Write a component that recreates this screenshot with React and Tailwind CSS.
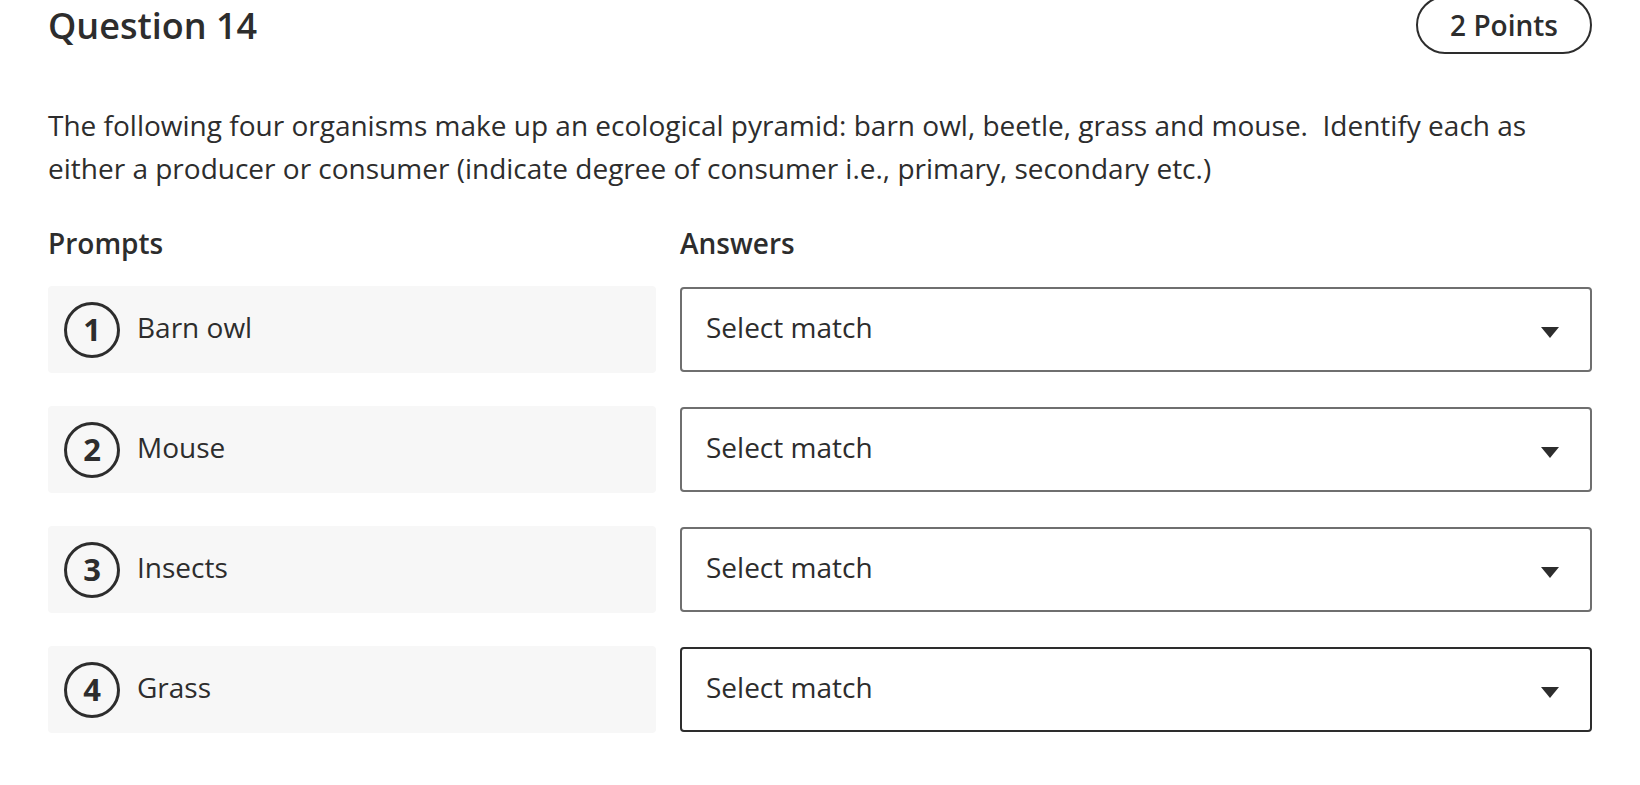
import React from "react";

const rows = [
  { n: 1, label: "Barn owl", active: false },
  { n: 2, label: "Mouse", active: false },
  { n: 3, label: "Insects", active: false },
  { n: 4, label: "Grass", active: true },
];

export default function App() {
  return (
    <div
      className="bg-white text-[#2d2d2d] px-12 w-[1640px] h-[785px] overflow-hidden"
      style={{ fontFamily: '"Open Sans", "Noto Sans", sans-serif' }}
    >
      <div className="flex justify-between items-start">
        <h1 className="mt-[5px] text-[36px] leading-[42px] font-semibold">Question 14</h1>
        <div className="-mt-1 h-[58px] px-[32px] flex items-center border-2 border-[#2d2d2d] rounded-full text-[28px] font-semibold leading-none">
          2 Points
        </div>
      </div>

      <p className="mt-[50px] text-[28px] leading-[43px]">
        The following four organisms make up an ecological pyramid: barn owl, beetle, grass and mouse.&nbsp; Identify each as either a producer or consumer (indicate degree of consumer i.e., primary, secondary etc.)
      </p>

      <div className="mt-[34px] grid grid-cols-[2fr_3fr] gap-x-6">
        <div className="text-[28px] leading-[38px] font-semibold">Prompts</div>
        <div className="text-[28px] leading-[38px] font-semibold">Answers</div>
      </div>

      <div className="mt-[24px] grid grid-cols-[2fr_3fr] gap-x-6 gap-y-[33px] items-center">
        {rows.map((r) => (
          <React.Fragment key={r.n}>
            <div className="h-[87px] bg-[#f7f7f7] rounded-[4px] flex items-center pl-4 gap-[17px]">
              <div className="w-[56px] h-[56px] rounded-full border-[3.5px] border-[#2d2d2d] flex items-center justify-center text-[31px] font-bold leading-none">
                {r.n}
              </div>
              <span className="text-[28px] leading-none mb-[5px]">{r.label}</span>
            </div>
            <div
              className={
                "h-[85px] rounded-[4px] border-2 flex items-center justify-between pl-6 pr-[31px] " +
                (r.active ? "border-[#2d2d2d]" : "border-[#6f6f6f]")
              }
            >
              <span className="text-[28px] leading-none mb-[5px]">Select match</span>
              <svg width="18" height="11" viewBox="0 0 18 11" className="mt-[5px]">
                <path d="M0 0 H18 L9 11 Z" fill="#2d2d2d" />
              </svg>
            </div>
          </React.Fragment>
        ))}
      </div>
    </div>
  );
}
